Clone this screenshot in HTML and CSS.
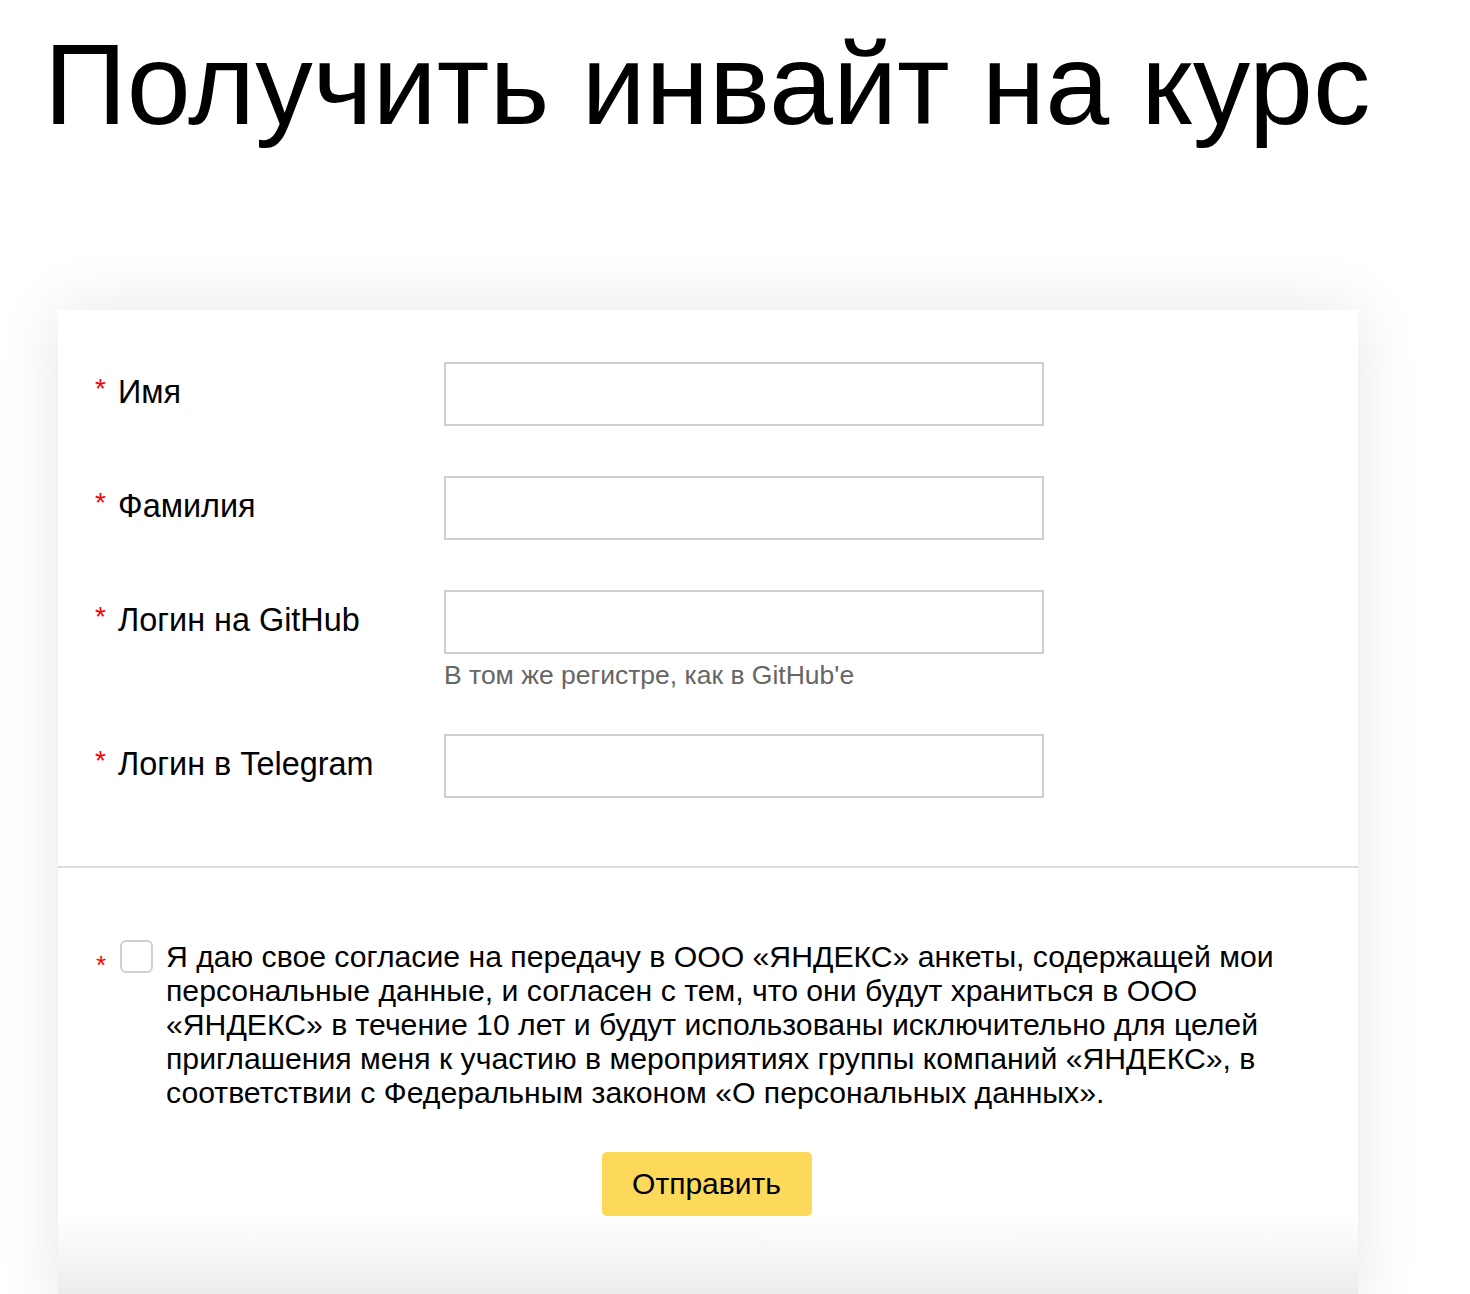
FILE: index.html
```html
<!DOCTYPE html>
<html lang="ru">
<head>
<meta charset="utf-8">
<title>Получить инвайт на курс</title>
<link rel="stylesheet" href="styles.css">
</head>
<body>
<h1 class="title">Получить инвайт на курс</h1>
<form class="card">
  <div class="fields">
    <div class="row">
      <label class="label"><span class="req">*</span>Имя</label>
      <div class="control"><input class="input" type="text"></div>
    </div>
    <div class="row">
      <label class="label"><span class="req">*</span>Фамилия</label>
      <div class="control"><input class="input" type="text"></div>
    </div>
    <div class="row">
      <label class="label"><span class="req">*</span>Логин на GitHub</label>
      <div class="control"><input class="input" type="text"><div class="hint">В том же регистре, как в GitHub'e</div></div>
    </div>
    <div class="row">
      <label class="label"><span class="req">*</span>Логин в Telegram</label>
      <div class="control"><input class="input" type="text"></div>
    </div>
  </div>
  <div class="consent-block">
    <div class="consent">
      <span class="req req-small">*</span>
      <span class="checkbox"></span>
      <p class="consent-text">Я даю свое согласие на передачу в ООО «ЯНДЕКС» анкеты, содержащей мои персональные данные, и согласен с тем, что они будут храниться в ООО «ЯНДЕКС» в течение 10 лет и будут использованы исключительно для целей приглашения меня к участию в мероприятиях группы компаний «ЯНДЕКС», в соответствии с Федеральным законом «О персональных данных».</p>
    </div>
    <div class="actions"><button class="submit" type="button">Отправить</button></div>
  </div>
</form>
</body>
</html>
```
FILE: styles.css
```css
html, body {
  margin: 0;
  padding: 0;
  background: #fff;
  font-family: "Liberation Sans", Arial, sans-serif;
  color: #000;
  height: 1294px;
  overflow: hidden;
}
.title {
  margin: 0;
  padding: 19px 0 0 44px;
  font-size: 115px;
  font-weight: 400;
  line-height: 130px;
  letter-spacing: 0;
}
.card {
  margin: 161px 0 0 58px;
  width: 1300px;
  background: linear-gradient(to bottom, #fff 0, #fff 905px, #ececec 984px);
  box-shadow: 0 0 60px rgba(0, 0, 0, 0.1);
  height: 1000px;
}
.fields {
  padding: 52px 0 68px 38px;
  border-bottom: 2px solid #dcdcdc;
  display: flex;
  flex-direction: column;
  gap: 50px;
}
.row {
  display: flex;
  align-items: flex-start;
}
.label {
  width: 348px;
  font-size: 32.4px;
  line-height: 34px;
  padding-top: 13px;
  display: flex;
}
.req {
  color: #f00;
  font-size: 28px;
  line-height: 28px;
  width: 22px;
  flex: none;
  margin-left: -1px;
  margin-right: 1px;
}
.control {
  display: flex;
  flex-direction: column;
}
.input {
  box-sizing: border-box;
  width: 600px;
  height: 64px;
  border: 2px solid #d0d0d0;
  margin: 0;
  padding: 0 14px;
  background: #fff;
  font: inherit;
}
.hint {
  font-size: 26.5px;
  line-height: 30px;
  color: #666;
  padding-top: 6px;
  margin-bottom: -6px;
}
.consent-block {
  padding: 72px 0 0 38px;
}
.consent {
  display: flex;
  align-items: flex-start;
}
.req-small {
  font-size: 26px;
  line-height: 26px;
  padding-top: 12px;
  width: 24px;
  margin-left: 0;
  margin-right: 0;
}
.checkbox {
  flex: none;
  box-sizing: border-box;
  width: 33px;
  height: 33px;
  border: 2px solid #d0d0d0;
  border-radius: 6px;
  margin-top: 0;
}
.consent-text {
  margin: 0 0 0 13px;
  width: 1130px;
  font-size: 30.2px;
  line-height: 34px;
}
.actions {
  display: flex;
  justify-content: center;
  padding: 42px 0 0 0;
  margin-left: -38px;
}
.submit {
  width: 210px;
  height: 64px;
  border: 0;
  border-radius: 5px;
  background: #fcd95b;
  font: inherit;
  font-size: 30px;
  color: #000;
  margin-left: -3px;
}
```
